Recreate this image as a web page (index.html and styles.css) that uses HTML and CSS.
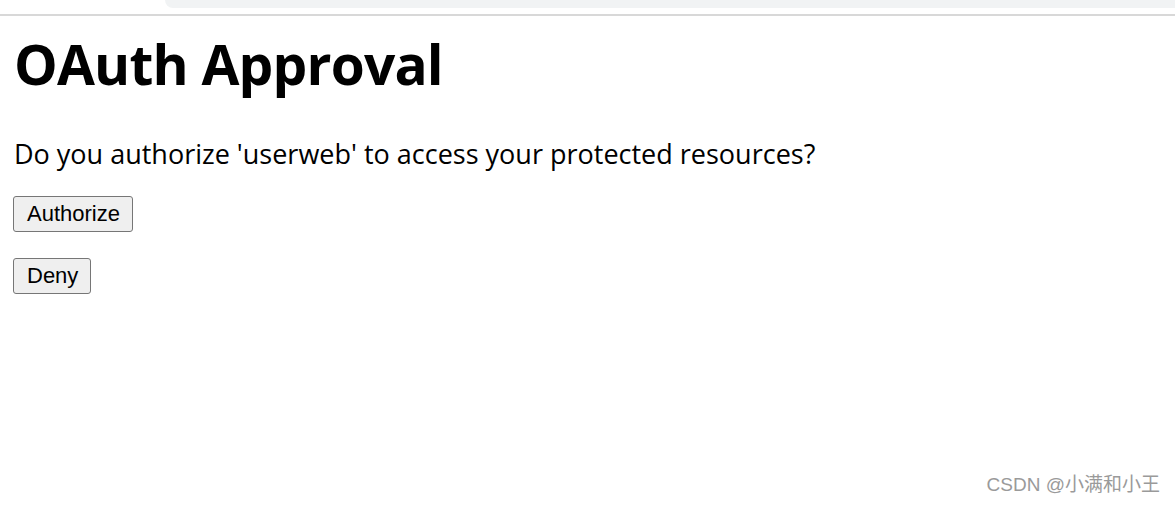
FILE: index.html
```html
<!DOCTYPE html>
<html>
<head>
<meta charset="utf-8">
<link rel="stylesheet" href="styles.css">
</head>
<body>
<div class="chrome"><div class="chrome-bar"></div></div>
<main class="page">
  <h1 class="title">OAuth Approval</h1>
  <p class="question">Do you authorize 'userweb' to access your protected resources?</p>
  <form class="action"><button type="button" class="btn">Authorize</button></form>
  <form class="action"><button type="button" class="btn">Deny</button></form>
</main>
<div class="watermark">CSDN @小满和小王</div>
</body>
</html>
```
FILE: styles.css
```css
html, body {
  margin: 0;
  padding: 0;
  background: #ffffff;
}
body {
  width: 1175px;
  height: 505px;
  position: relative;
  overflow: hidden;
  font-family: "Open Sans", "Noto Sans", sans-serif;
  color: #000;
}
.chrome {
  height: 14px;
  border-bottom: 2px solid #d8d8d8;
  display: flex;
  justify-content: flex-end;
}
.chrome-bar {
  width: 1010px;
  height: 8px;
  background: #f1f3f4;
  border-bottom-left-radius: 12px;
}
.page {
  padding: 0 14px;
}
.title {
  margin: 0;
  padding-top: 8px;
  font-size: 55px;
  font-weight: 700;
  line-height: 80px;
  letter-spacing: -0.8px;
}
.question {
  margin: 0;
  padding-top: 32px;
  font-size: 27px;
  line-height: 36px;
}
.action {
  margin: 0;
}
.action:first-of-type {
  margin-top: 24px;
}
.action + .action {
  margin-top: 26px;
}
.btn {
  margin-left: -1px;
  height: 36px;
  padding: 0 12px 0 13px;
  font-family: "Liberation Sans", Arial, sans-serif;
  font-size: 22px;
  color: #000;
  background: #efefef;
  border: 1px solid #767676;
  border-radius: 3px;
}
.watermark {
  position: absolute;
  right: 15px;
  bottom: 9px;
  font-family: "Liberation Sans", "Noto Sans CJK SC", sans-serif;
  font-size: 19px;
  color: #9a9a9a;
}
```
